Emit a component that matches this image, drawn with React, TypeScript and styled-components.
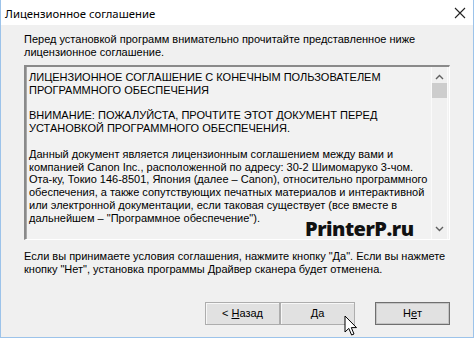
import React from "react";
import styled, { createGlobalStyle } from "styled-components";

const Global = createGlobalStyle`
  html, body { margin: 0; padding: 0; background: #f0f0f0; }
  body { font-family: "Liberation Sans", Arial, sans-serif; }
`;

const Window = styled.div`
  position: relative;
  width: 474px;
  height: 338px;
  box-sizing: border-box;
  border: 1px solid #9cc3ea;
  border-top: none;
  background: #f0f0f0;
  display: flex;
  flex-direction: column;
  overflow: hidden;
`;

const TitleBar = styled.div`
  height: 25px;
  flex: none;
  background: #ffffff;
  display: flex;
  align-items: center;
  justify-content: space-between;
  padding: 0 7px 0 4px;
`;

const Title = styled.span`
  font-family: "Noto Sans", "Open Sans", sans-serif;
  font-size: 11.3px;
  color: #000;
  margin-top: 2px;
`;

const Close = styled.svg`
  width: 12px;
  height: 12px;
`;

const Body = styled.div`
  flex: 1;
  display: flex;
  flex-direction: column;
  padding: 8px 23px 0 23px;
  font-size: 11px;
  line-height: 13px;
  color: #000;
  white-space: nowrap;
`;

const Para = styled.p<{ $mt?: number }>`
  margin: ${(p) => p.$mt ?? 0}px 0 0 0;
`;

const Box = styled.div`
  position: relative;
  margin-top: 6px;
  height: 175px;
  box-sizing: border-box;
  border-style: solid;
  border-width: 2px 1px 1px 2px;
  border-color: #8a8a8a #ffffff #ffffff #8a8a8a;
  box-shadow: inset 1px 0 0 #a8a8a8;
  display: flex;
  background: #f2f2f2;
`;

const BoxText = styled.div`
  flex: 1;
  padding: 4px 4px 0 3px;
  font-size: 11px;
  line-height: 12.8px;
  overflow: hidden;
`;

const Scrollbar = styled.div`
  width: 15px;
  flex: none;
  margin: 0 1px 0 0;
  border-left: 1px solid #fafafa;
  border-right: 1px solid #fafafa;
  background: #f0f0f0;
  display: flex;
  flex-direction: column;
  align-items: center;
`;

const Arrow = styled.svg<{ $top?: boolean }>`
  width: 9px;
  height: 6px;
  flex: none;
  margin: ${(p) => (p.$top ? "7px 0 0 0" : "0 0 7px 0")};
`;

const Thumb = styled.div`
  width: 15px;
  height: 15px;
  background: #cdcdcd;
  margin-top: 3px;
`;

const Spacer = styled.div`
  flex: 1;
`;

const Watermark = styled.div`
  position: absolute;
  left: 279px;
  top: 155px;
  font-family: "Open Sans", "Noto Sans", sans-serif;
  font-weight: 800;
  font-size: 20px;
  letter-spacing: -0.5px;
  color: #111;
`;

const Buttons = styled.div`
  display: flex;
  justify-content: flex-end;
  margin-top: 26px;
`;

const Button = styled.div<{ $gap?: number; $primary?: boolean }>`
  width: 75px;
  height: 23px;
  box-sizing: border-box;
  margin-left: ${(p) => p.$gap ?? 0}px;
  display: flex;
  align-items: center;
  justify-content: center;
  background: #e1e1e1;
  border: 1px solid ${(p) => (p.$primary ? "#6f6f6f" : "#adadad")};
  box-shadow: ${(p) => (p.$primary ? "inset 0 0 0 1px #c4c4c4" : "inset 1px 1px 0 #f7f7f7")};
  font-size: 11px;
  color: #000;
`;

const U = styled.span`
  text-decoration: underline;
  text-underline-offset: 1px;
`;

const Cursor = styled.svg`
  position: absolute;
  left: 343px;
  top: 315px;
  width: 14px;
  height: 22px;
`;

export default function App() {
  return (
    <>
      <Global />
      <Window>
        <TitleBar>
          <Title>Лицензионное соглашение</Title>
          <Close viewBox="0 0 12 12">
            <path d="M1 1 L11 11 M11 1 L1 11" stroke="#222" strokeWidth="1.1" fill="none" />
          </Close>
        </TitleBar>
        <Body>
          <Para>
            Перед установкой программ внимательно прочитайте представленное ниже
            <br />
            лицензионное соглашение.
          </Para>
          <Box>
            <BoxText>
              ЛИЦЕНЗИОННОЕ СОГЛАШЕНИЕ С КОНЕЧНЫМ ПОЛЬЗОВАТЕЛЕМ
              <br />
              ПРОГРАММНОГО ОБЕСПЕЧЕНИЯ
              <br />
              <br />
              ВНИМАНИЕ: ПОЖАЛУЙСТА, ПРОЧТИТЕ ЭТОТ ДОКУМЕНТ ПЕРЕД
              <br />
              УСТАНОВКОЙ ПРОГРАММНОГО ОБЕСПЕЧЕНИЯ.
              <br />
              <br />
              Данный документ является лицензионным соглашением между вами и
              <br />
              компанией Canon Inc., расположенной по адресу: 30-2 Шимомаруко 3-чом.
              <br />
              Ота-ку, Токио 146-8501, Япония (далее – Canon), относительно программного
              <br />
              обеспечения, а также сопутствующих печатных материалов и интерактивной
              <br />
              или электронной документации, если таковая существует (все вместе в
              <br />
              дальнейшем – "Программное обеспечение").
            </BoxText>
            <Scrollbar>
              <Arrow viewBox="0 0 9 6" $top>
                <path d="M1 5 L4.5 1.5 L8 5" stroke="#606060" strokeWidth="1.4" fill="none" />
              </Arrow>
              <Thumb />
              <Spacer />
              <Arrow viewBox="0 0 9 6">
                <path d="M1 1 L4.5 4.5 L8 1" stroke="#606060" strokeWidth="1.4" fill="none" />
              </Arrow>
            </Scrollbar>
            <Watermark>PrinterP.ru</Watermark>
          </Box>
          <Para $mt={10}>
            Если вы принимаете условия соглашения, нажмите кнопку "Да". Если вы нажмете
            <br />
            кнопку "Нет", установка программы Драйвер сканера будет отменена.
          </Para>
          <Buttons>
            <Button>
              &lt;&nbsp;<U>Н</U>азад
            </Button>
            <Button>
              <U>Д</U>а
            </Button>
            <Button $gap={20} $primary>
              Н<U>е</U>т
            </Button>
          </Buttons>
        </Body>
        <Cursor viewBox="0 0 14 22">
          <path
            d="M1 1 L1 17 L4.8 13.4 L7.6 20 L10 19 L7.3 12.6 L12.5 12.6 Z"
            fill="#ffffff"
            stroke="#000"
            strokeWidth="1"
            strokeLinejoin="round"
          />
        </Cursor>
      </Window>
    </>
  );
}
